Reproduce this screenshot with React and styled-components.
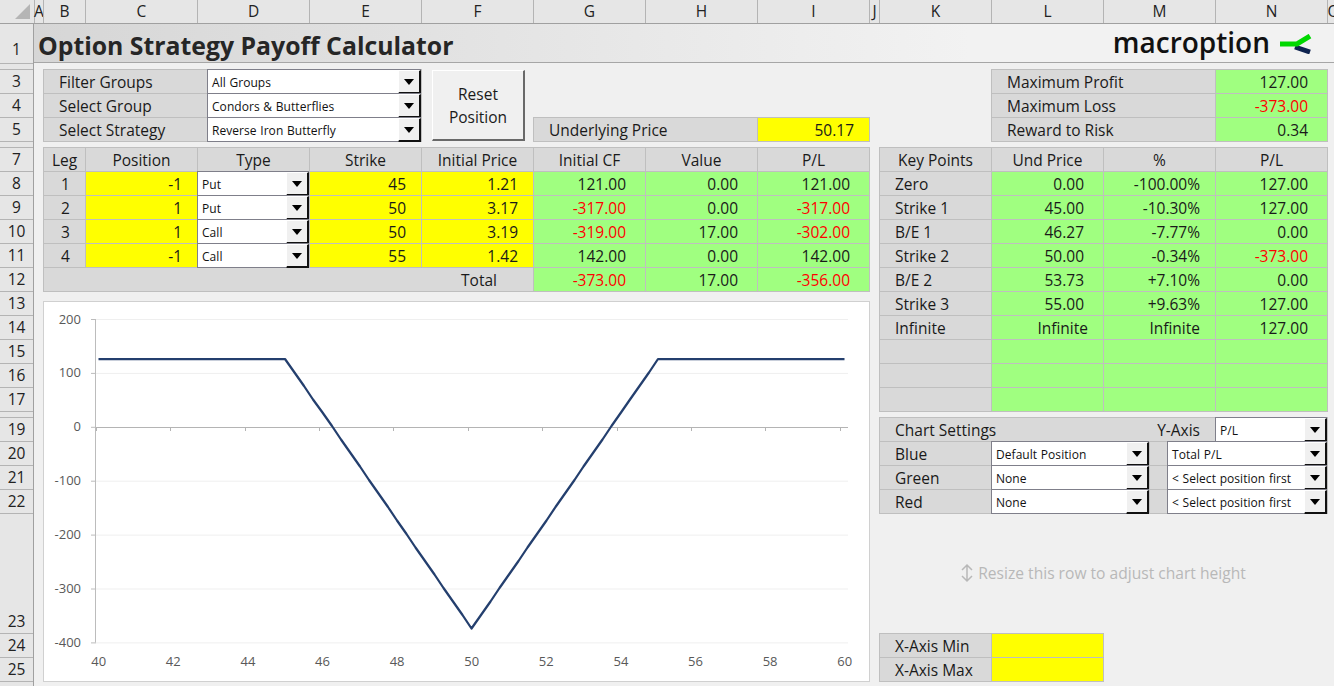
import React from 'react';
import styled, { createGlobalStyle, css } from 'styled-components';

const GlobalStyle = createGlobalStyle`
  html, body {
    margin: 0;
    height: 100%;
    overflow: hidden;
    background: #f0f0f0;
  }
  * { box-sizing: border-box; }
  body {
    font-family: "Open Sans", "Liberation Sans", sans-serif;
    font-size: 15.5px;
    color: #1a1a1a;
  }
`;

const Page = styled.div`
  width: 1334px;
  height: 686px;
  overflow: hidden;
`;

/* column letters */
const ColumnBar = styled.div`
  display: flex;
  height: 24px;
  overflow: hidden;
  background: #e6e6e6;
  border-bottom: 1px solid #a0a0a0;
`;

const Corner = styled.div`
  position: relative;
  width: 34px;
  flex: none;
  &::after {
    content: '';
    position: absolute;
    right: 4px;
    bottom: 4px;
    width: 0;
    height: 0;
    border-style: solid;
    border-width: 0 0 15px 15px;
    border-color: transparent transparent #b5b5b5 transparent;
  }
`;

const ColumnLetter = styled.div`
  width: ${p => p.$w}px;
  flex: none;
  display: flex;
  justify-content: center;
  line-height: 23px;
  border-left: 1px solid #b4b4b4;
  color: #222;
`;

const Body = styled.div`
  display: flex;
  height: 662px;
`;

/* row numbers */
const RowBar = styled.div`
  width: 34px;
  flex: none;
  background: #e6e6e6;
  border-right: 1px solid #a0a0a0;
`;

const RowNumber = styled.div`
  display: flex;
  align-items: flex-end;
  justify-content: center;
  height: ${p => p.$h}px;
  padding-bottom: ${p => p.$lift || 0}px;
  line-height: 23px;
  overflow: hidden;
  border-top: ${p => (p.$first ? 'none' : '1px solid #b4b4b4')};
  color: #222;
`;

const Sheet = styled.div`
  flex: 1;
  display: grid;
  grid-template-columns: 9px 42px repeat(7, 112px) 10px repeat(4, 112px) 1fr;
  grid-template-rows: 39px 6px 24px 24px 24px 6px repeat(11, 24px) 6px 24px 24px 24px 24px 120px 24px 24px 1fr;
`;

const placed = css`
  grid-column: ${p => p.$col};
  grid-row: ${p => p.$row};
`;

const TitleBar = styled.div`
  ${placed}
  display: flex;
  align-items: center;
  justify-content: space-between;
  padding: 0 22px 0 4px;
  background: linear-gradient(to right, #d6d6d6, #f2f2f2 72%);
  border-bottom: 1px solid #a6a6a6;
`;

const Title = styled.h1`
  margin: 3px 0 0;
  font-size: 24.8px;
  font-weight: 700;
  color: #262626;
`;

const Logo = styled.div`
  display: flex;
  align-items: center;
  gap: 10px;
  margin-bottom: 2px;
`;

const LogoText = styled.span`
  font-size: 28px;
  font-weight: 600;
  color: #111;
  line-height: 36px;
`;

const LogoMark = styled.svg`
  margin-top: 4px;
`;

const Panel = styled.div`
  ${placed}
  display: grid;
  grid-template-columns: ${p => p.$cols};
  grid-auto-rows: 24px;
  box-shadow: 1px 0 0 #bfbfbf, 0 1px 0 #bfbfbf, 1px 1px 0 #bfbfbf;
`;

const cell = css`
  grid-column: span ${p => p.$span || 1};
  display: flex;
  align-items: center;
  justify-content: ${p => (p.$align === 'center' ? 'center' : p.$align === 'right' ? 'flex-end' : p.$align === 'between' ? 'space-between' : 'flex-start')};
  padding: 0 ${p => p.$padRight ?? 0}px 0 ${p => p.$padLeft ?? 0}px;
  border-left: 1px solid #bfbfbf;
  border-top: 1px solid #bfbfbf;
  white-space: nowrap;
  color: ${p => (p.$negative ? '#ff0000' : '#1a1a1a')};
`;

const LabelCell = styled.div`
  ${cell}
  background: #d9d9d9;
`;

const ValueCell = styled.div`
  ${cell}
  background: #a0ff80;
`;

const InputCell = styled.div`
  ${cell}
  background: #ffff00;
`;

/* combo box sitting over a cell */
const Combo = styled.div`
  grid-column: span ${p => p.$span || 1};
  display: flex;
  background: #fff;
  border-left: 1px solid #7f7f8a;
  border-top: 1px solid #7f7f8a;
  border-bottom: 1px solid #7f7f8a;
  margin-bottom: -1px;
  position: relative;
`;

const ComboText = styled.span`
  flex: 1;
  padding: 1px 0 0 4px;
  font-size: 12px;
  line-height: 24px;
  letter-spacing: 0.05px;
  word-spacing: 0.5px;
  white-space: nowrap;
  overflow: hidden;
  color: #111;
`;

const ComboButton = styled.div`
  width: 23px;
  flex: none;
  display: flex;
  align-items: center;
  justify-content: center;
  background: #f0f0f0;
  border-top: 1px solid #fff;
  border-left: 1px solid #fff;
  border-right: 2px solid #111;
  border-bottom: 2px solid #111;
  margin-bottom: -1px;
  &::after {
    content: '';
    border-style: solid;
    border-width: 6px 5px 0 5px;
    border-color: #000 transparent transparent transparent;
  }
`;

const ResetButton = styled.button`
  ${placed}
  margin: 1px 8px 0 11px;
  padding: 2px 0 0;
  font-family: inherit;
  font-size: 15.5px;
  line-height: 23px;
  color: #1a1a1a;
  background: #f0f0f0;
  border-style: solid;
  border-width: 1px 2px 2px 1px;
  border-color: #fff #696969 #696969 #fff;
`;

const ChartFrame = styled.div`
  ${placed}
  margin: 10px -1px -1px 0;
  background: #fff;
  border: 1px solid #d0d0d0;
  overflow: hidden;
`;

const Hint = styled.div`
  ${placed}
  display: flex;
  align-items: center;
  justify-content: center;
  gap: 4px;
  color: #b8b8b8;
  font-size: 15.6px;
`;

const columns = [
  ['A', 9], ['B', 42], ['C', 112], ['D', 112], ['E', 112], ['F', 112], ['G', 112], ['H', 112], ['I', 112],
  ['J', 10], ['K', 112], ['L', 112], ['M', 112], ['N', 112], ['O', 12],
];

const rows = [
  ['1', 39], ['', 6], ['3', 24], ['4', 24], ['5', 24], ['', 6], ['7', 24], ['8', 24], ['9', 24], ['10', 24],
  ['11', 24], ['12', 24], ['13', 24], ['14', 24], ['15', 24], ['16', 24], ['17', 24], ['', 6], ['19', 24],
  ['20', 24], ['21', 24], ['22', 24], ['23', 120], ['24', 24], ['25', 24], ['', 5],
];

const legs = [
  { leg: 1, pos: -1, type: 'Put', strike: 45, price: 1.21, value: 0 },
  { leg: 2, pos: 1, type: 'Put', strike: 50, price: 3.17, value: 0 },
  { leg: 3, pos: 1, type: 'Call', strike: 50, price: 3.19, value: 17 },
  { leg: 4, pos: -1, type: 'Call', strike: 55, price: 1.42, value: 0 },
];

const keyPoints = [
  ['Zero', '0.00', '-100.00%', 127],
  ['Strike 1', '45.00', '-10.30%', 127],
  ['B/E 1', '46.27', '-7.77%', 0],
  ['Strike 2', '50.00', '-0.34%', -373],
  ['B/E 2', '53.73', '+7.10%', 0],
  ['Strike 3', '55.00', '+9.63%', 127],
  ['Infinite', 'Infinite', 'Infinite', 127],
];

const money = n => n.toFixed(2);

const payoff = x =>
  legs.reduce((sum, l) => {
    const intrinsic = l.type === 'Put' ? Math.max(l.strike - x, 0) : Math.max(x - l.strike, 0);
    return sum + l.pos * 100 * (intrinsic - l.price);
  }, 0);

const Dropdown = ({ value, span }) => (
  <Combo $span={span}>
    <ComboText>{value}</ComboText>
    <ComboButton />
  </Combo>
);

const Money = ({ value, padRight = 19 }) => (
  <ValueCell $align="right" $padRight={padRight} $negative={value < 0}>{money(value)}</ValueCell>
);

const PayoffChart = () => {
  const xPos = x => 98.7 + 37.3 * (x - 40);
  const yPos = v => 427.3 - 0.539 * v;
  const points = [];
  for (let i = 0; i <= 80; i++) {
    const x = 40 + i / 4;
    points.push(`${Math.round(xPos(x) * 2) / 2},${Math.round(yPos(payoff(x)) * 2) / 2}`);
  }
  const ticks = [200, 100, 0, -100, -200, -300, -400];
  const labels = [40, 42, 44, 46, 48, 50, 52, 54, 56, 58, 60];
  return (
    <svg width="825" height="379" viewBox="44 302 825 379" style={{ display: 'block' }}>
      {ticks.filter(t => t !== 0).map(t => (
        <line key={t} x1="96" x2="848" y1={yPos(t)} y2={yPos(t)} stroke="#efefef" strokeWidth="1" />
      ))}
      <line x1="95.5" x2="95.5" y1="319" y2="642.5" stroke="#bcbcbc" strokeWidth="1" />
      {ticks.map(t => (
        <line key={t} x1="91" x2="96" y1={yPos(t)} y2={yPos(t)} stroke="#bcbcbc" strokeWidth="1" />
      ))}
      <line x1="96" x2="848" y1="427.5" y2="427.5" stroke="#b4b4b4" strokeWidth="1" />
      {labels.map(l => {
        const x = Math.round(95.7 + 37.2 * (l - 40)) + 0.5;
        return <line key={l} x1={x} x2={x} y1="427" y2="431" stroke="#b4b4b4" strokeWidth="1" />;
      })}
      {ticks.map(t => (
        <text key={t} x="81" y={yPos(t) + 4} textAnchor="end" fontSize="13" fill="#595959" fontFamily="Open Sans">{t}</text>
      ))}
      {labels.map(l => (
        <text key={l} x={xPos(l)} y="666" textAnchor="middle" fontSize="13" fill="#595959" fontFamily="Open Sans">{l}</text>
      ))}
      <polyline points={points.join(' ')} fill="none" stroke="#243f6e" strokeWidth="2.25" strokeLinejoin="round" />
    </svg>
  );
};

export default function App() {
  return (
    <Page>
      <GlobalStyle />
      <ColumnBar>
        <Corner />
        {columns.map(([letter, w]) => <ColumnLetter key={letter} $w={w}>{letter}</ColumnLetter>)}
      </ColumnBar>
      <Body>
        <RowBar>
          {rows.map(([n, h], i) => <RowNumber key={i} $h={h} $first={i === 0} $lift={i === 0 ? 2 : 0}>{n}</RowNumber>)}
        </RowBar>
        <Sheet>
          <TitleBar $col="1 / -1" $row="1">
            <Title>Option Strategy Payoff Calculator</Title>
            <Logo>
              <LogoText>macroption</LogoText>
              <LogoMark width="32" height="20" viewBox="0 0 32 20">
                <path d="M15 13 L30 18" stroke="#0f2350" strokeWidth="5" fill="none" />
                <path d="M0 10 L17 10 L30 2" stroke="#00d800" strokeWidth="5" fill="none" />
              </LogoMark>
            </Logo>
          </TitleBar>

          <Panel $col="2 / 6" $row="3 / 6" $cols="164px 214px">
            <LabelCell $padLeft={15}>Filter Groups</LabelCell>
            <Dropdown value="All Groups" />
            <LabelCell $padLeft={15}>Select Group</LabelCell>
            <Dropdown value="Condors & Butterflies" />
            <LabelCell $padLeft={15}>Select Strategy</LabelCell>
            <Dropdown value="Reverse Iron Butterfly" />
          </Panel>

          <ResetButton $col="6" $row="3 / 6">Reset<br />Position</ResetButton>

          <Panel $col="7 / 10" $row="5" $cols="224px 112px">
            <LabelCell $padLeft={15}>Underlying Price</LabelCell>
            <InputCell $align="right" $padRight={15}>50.17</InputCell>
          </Panel>

          <Panel $col="12 / 15" $row="3 / 6" $cols="224px 112px">
            <LabelCell $padLeft={15}>Maximum Profit</LabelCell>
            <Money value={127} />
            <LabelCell $padLeft={15}>Maximum Loss</LabelCell>
            <Money value={-373} />
            <LabelCell $padLeft={15}>Reward to Risk</LabelCell>
            <Money value={0.34} />
          </Panel>

          <Panel $col="2 / 10" $row="7 / 13" $cols="42px repeat(7, 112px)">
            {['Leg', 'Position', 'Type', 'Strike', 'Initial Price', 'Initial CF', 'Value', 'P/L'].map(h => (
              <LabelCell key={h} $align="center">{h}</LabelCell>
            ))}
            {legs.map(l => {
              const cf = -l.pos * l.price * 100;
              return (
                <React.Fragment key={l.leg}>
                  <LabelCell $align="center" $padLeft={2}>{l.leg}</LabelCell>
                  <InputCell $align="right" $padRight={15}>{l.pos}</InputCell>
                  <Dropdown value={l.type} />
                  <InputCell $align="right" $padRight={15}>{l.strike}</InputCell>
                  <InputCell $align="right" $padRight={15}>{l.price.toFixed(2)}</InputCell>
                  <Money value={cf} />
                  <Money value={l.value} />
                  <Money value={cf + l.value} />
                </React.Fragment>
              );
            })}
            <LabelCell $span={5} $align="right" $padRight={36}>Total</LabelCell>
            <Money value={-373} />
            <Money value={17} />
            <Money value={-356} />
          </Panel>

          <ChartFrame $col="2 / 10" $row="13 / 26"><PayoffChart /></ChartFrame>

          <Panel $col="11 / 15" $row="7 / 18" $cols="repeat(4, 112px)">
            {['Key Points', 'Und Price', '%', 'P/L'].map(h => (
              <LabelCell key={h} $align="center">{h}</LabelCell>
            ))}
            {keyPoints.map(([name, und, pct, pl]) => (
              <React.Fragment key={name}>
                <LabelCell $padLeft={15}>{name}</LabelCell>
                <ValueCell $align="right" $padRight={und === 'Infinite' ? 15 : 19}>{und}</ValueCell>
                <ValueCell $align="right" $padRight={15}>{pct}</ValueCell>
                <Money value={pl} />
              </React.Fragment>
            ))}
            {[0, 1, 2].map(i => (
              <React.Fragment key={i}>
                <LabelCell />
                <ValueCell />
                <ValueCell />
                <ValueCell />
              </React.Fragment>
            ))}
          </Panel>

          <Panel $col="11 / 15" $row="19 / 23" $cols="112px 158px 18px 48px 112px">
            <LabelCell $span={4} $align="between" $padLeft={15} $padRight={15}>
              <span>Chart Settings</span><span>Y-Axis</span>
            </LabelCell>
            <Dropdown value="P/L" />
            <LabelCell $padLeft={15}>Blue</LabelCell>
            <Dropdown value="Default Position" />
            <LabelCell />
            <Dropdown value="Total P/L" span={2} />
            <LabelCell $padLeft={15}>Green</LabelCell>
            <Dropdown value="None" />
            <LabelCell />
            <Dropdown value="< Select position first" span={2} />
            <LabelCell $padLeft={15}>Red</LabelCell>
            <Dropdown value="None" />
            <LabelCell />
            <Dropdown value="< Select position first" span={2} />
          </Panel>

          <Hint $col="11 / 15" $row="23">
            <svg width="14" height="20" viewBox="0 0 14 20">
              <path d="M7 2 V18 M2 7 L7 2 L12 7 M2 13 L7 18 L12 13" stroke="#b8b8b8" strokeWidth="1.5" fill="none" />
            </svg>
            <span>Resize this row to adjust chart height</span>
          </Hint>

          <Panel $col="11 / 13" $row="24 / 26" $cols="112px 112px">
            <LabelCell $padLeft={15}>X-Axis Min</LabelCell>
            <InputCell />
            <LabelCell $padLeft={15}>X-Axis Max</LabelCell>
            <InputCell />
          </Panel>
        </Sheet>
      </Body>
    </Page>
  );
}
